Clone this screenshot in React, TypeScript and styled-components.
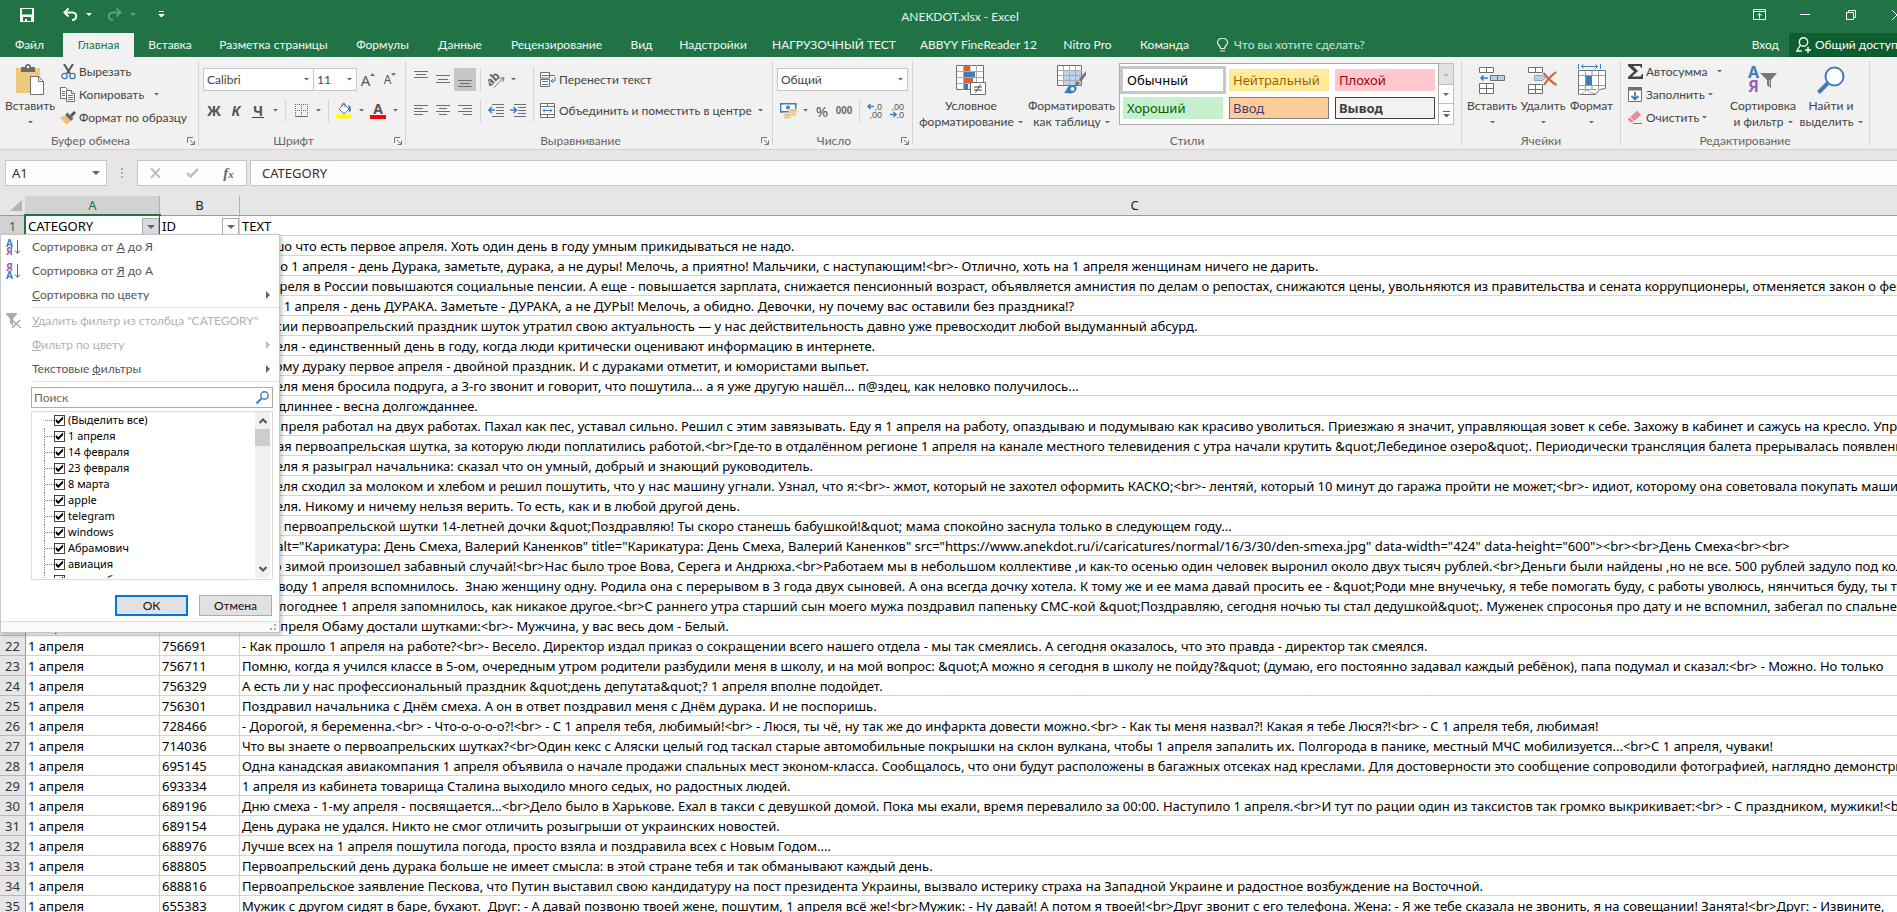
import React from 'react';
import styled, { createGlobalStyle, css } from 'styled-components';

const GREEN = '#217346';
const UI_FONT = 'Lato, "Noto Sans", sans-serif';
const CELL_FONT = '"Noto Sans", "Open Sans", sans-serif';

const Global = createGlobalStyle`
  * { box-sizing: border-box; }
  body { margin: 0; overflow: hidden; font: 12px/16px ${UI_FONT}; color: #444; background: #e6e6e6; }
  button, input, select { font: inherit; color: inherit; margin: 0; border-radius: 0; }
  button { border: 0; padding: 0; background: none; }
  svg { display: block; flex: none; }
`;

/* The window runs slightly past the right edge of the screen. */
const Window = styled.div`
  display: flex;
  flex-direction: column;
  width: calc(100% + 23px);
  height: 100vh;
  overflow: hidden;
`;

/* ---------- title bar ---------- */
const TitleBar = styled.header`
  display: grid;
  grid-template-columns: 1fr auto 1fr;
  align-items: center;
  height: 33px;
  background: ${GREEN};
  color: #fff;
`;
const QuickAccess = styled.div`
  display: flex;
  align-items: center;
  gap: 8px;
  padding: 0 0 4px 20px;
`;
const QuickButton = styled.button<{ $gap?: number; $dim?: boolean }>`
  display: flex;
  align-items: center;
  color: #fff;
  margin-left: ${p => p.$gap ?? 0}px;
  opacity: ${p => (p.$dim ? 0.3 : 1)};
`;
const FileTitle = styled.h1`
  margin: 0;
  font-size: 12px;
  font-weight: 400;
  color: #e9f2ed;
`;
const WindowButtons = styled.div`
  display: flex;
  justify-content: flex-end;
  padding-bottom: 4px;
`;
const WindowButton = styled.button`
  display: flex;
  align-items: center;
  justify-content: center;
  width: 46px;
  height: 28px;
  color: #fff;
`;

/* ---------- tabs ---------- */
const TabBar = styled.nav`
  display: flex;
  height: 24px;
  background: ${GREEN};
  color: #f2f8f4;
`;
const Tab = styled.button<{ $w: number; $active?: boolean }>`
  flex: none;
  width: ${p => p.$w}px;
  white-space: nowrap;
  ${p => p.$active && css`background: #f1f1f1; color: ${GREEN};`}
  &:first-child { padding-right: 4px; }
`;
const TellMe = styled.button`
  display: flex;
  align-items: center;
  gap: 6px;
  padding-left: 14px;
  color: #cfe3d7;
`;
const SignIn = styled.button`
  margin-left: auto;
  padding: 0 10px;
`;
const Share = styled.button`
  display: flex;
  align-items: center;
  gap: 4px;
  width: 131px;
  padding-left: 7px;
  white-space: nowrap;
  background: #0e5c2f;
  color: #fff;
`;

/* ---------- ribbon ---------- */
const Ribbon = styled.section`
  display: flex;
  flex: none;
  height: 93px;
  background: #f1f1f1;
  border-bottom: 1px solid #d2d2d2;
`;
const GroupBox = styled.div<{ $w: number }>`
  display: flex;
  flex-direction: column;
  flex: none;
  width: ${p => p.$w}px;
  margin: 4px 0;
  border-right: 1px solid #d4d4d4;
`;
const GroupBody = styled.div<{ $pad?: number }>`
  display: flex;
  flex: 1;
  padding: 0 ${p => p.$pad ?? 4}px;
`;
const GroupFooter = styled.div`
  display: flex;
  align-items: center;
  height: 16px;
  margin-bottom: -4px;
  color: #666;
`;
const GroupName = styled.span`
  flex: 1;
  text-align: center;
`;
const Launcher = styled.button`
  width: 17px;
  padding-left: 6px;
`;
const BigButton = styled.button<{ $w: number }>`
  display: flex;
  flex-direction: column;
  align-items: center;
  width: ${p => p.$w}px;
  padding-top: 3px;
  white-space: nowrap;
`;
const BigIcon = styled.span`
  display: flex;
  align-items: center;
  justify-content: center;
  height: 32px;
  margin-bottom: 2px;
`;
const Line = styled.span`
  display: flex;
  align-items: center;
  gap: 4px;
  height: 16px;
`;
const Stack = styled.div<{ $w?: number }>`
  display: flex;
  flex-direction: column;
  width: ${p => (p.$w ? p.$w + 'px' : 'auto')};
  margin-top: -1px;
`;
const SmallButton = styled.button`
  display: flex;
  align-items: center;
  gap: 3px;
  height: 23px;
  padding-left: 2px;
  white-space: nowrap;
`;
const IconSlot = styled.span`
  display: flex;
  justify-content: center;
  width: 16px;
`;
const ArrowSlot = styled.span<{ $gap?: number }>`
  margin-left: ${p => p.$gap ?? 0}px;
`;
const Rows = styled.div`
  display: flex;
  flex-direction: column;
  gap: 8px;
  padding-top: 7px;
`;
const Row = styled.div`
  display: flex;
  align-items: center;
  height: 23px;
`;
const Tool = styled.button<{ $on?: boolean; $w?: number }>`
  display: flex;
  align-items: center;
  justify-content: center;
  width: ${p => p.$w ?? 22}px;
  height: 23px;
  background: ${p => (p.$on ? '#c6c6c6' : 'none')};
`;
const Bar = styled.i<{ $tall?: boolean }>`
  align-self: ${p => (p.$tall ? 'flex-start' : 'center')};
  width: 1px;
  height: ${p => (p.$tall ? 55 : 22)}px;
  margin: ${p => (p.$tall ? '6px 4px 0' : '0 4px')};
  background: #d4d4d4;
`;
const Letter = styled.span<{ $kind?: 'italic' | 'under' | 'big' | 'font' | 'small' | 'digits' }>`
  font: 700 14px/18px "Noto Sans", sans-serif;
  color: #555;
  ${p => p.$kind === 'italic' && css`font-style: italic;`}
  ${p => p.$kind === 'under' && css`border-bottom: 1px solid #444; line-height: 13px; padding: 0 1px;`}
  ${p => p.$kind === 'big' && css`font-weight: 400; font-size: 15px;`}
  ${p => p.$kind === 'small' && css`font-weight: 400; font-size: 12px;`}
  ${p => p.$kind === 'digits' && css`font: 700 10px/12px "Liberation Sans Narrow", "Liberation Sans", sans-serif; color: #666;`}
  ${p => p.$kind === 'font' && css`border-bottom: 4px solid #f00; line-height: 13px; padding: 0 3px;`}
`;
const Combo = styled.span<{ $w: number; $joined?: boolean }>`
  position: relative;
  display: flex;
  width: ${p => p.$w}px;
  height: 23px;
  background: #fff;
  border: 1px solid #c6c6c6;
  border-left-width: ${p => (p.$joined ? 0 : 1)}px;
  svg { position: absolute; right: 4px; top: 9px; pointer-events: none; }
`;
const ComboSelect = styled.select`
  appearance: none;
  flex: 1;
  width: 100%;
  border: 0;
  padding: 0 0 0 3px;
  background: transparent;
`;
const Gallery = styled.div`
  display: flex;
  align-self: flex-start;
  margin: 2px 0 0 3px;
`;
const StyleGrid = styled.div`
  display: grid;
  grid-template-columns: repeat(3, 100px);
  gap: 6px;
  padding: 5px 3px;
  background: #fff;
  border: 1px solid #ababab;
`;
const StyleCell = styled.button<{ $bg: string; $fg: string; $edge?: string; $bold?: boolean; $current?: boolean }>`
  height: 22px;
  padding: 0 4px;
  text-align: left;
  font: ${p => (p.$bold ? 700 : 400)} 13px/18px ${CELL_FONT};
  background: ${p => p.$bg};
  color: ${p => p.$fg};
  border: ${p => (p.$edge ? `1px solid ${p.$edge}` : '0')};
  padding-left: ${p => (p.$edge ? 3 : 4)}px;
  outline: ${p => (p.$current ? '3px solid #c6c6c6' : 'none')};
`;
const GalleryScroll = styled.div`
  display: grid;
  grid-template-rows: 21px 19px 22px;
  width: 15px;
`;
const GalleryStep = styled.button<{ $off?: boolean }>`
  display: flex;
  flex-direction: column;
  align-items: center;
  justify-content: center;
  gap: 2px;
  color: ${p => (p.$off ? '#bbb' : '#666')};
  background: ${p => (p.$off ? '#e1e1e1' : '#fff')};
  border: solid #c0c0c0;
  border-width: 1px 1px 0 0;
  &:last-child { border-bottom-width: 1px; }
`;

/* ---------- formula bar ---------- */
const FormulaBar = styled.section`
  display: flex;
  flex: none;
  align-items: center;
  height: 46px;
  padding: 0 5px;
`;
const NameBox = styled.span`
  position: relative;
  width: 102px;
  svg { position: absolute; right: 7px; top: 11px; }
`;
const BarInput = styled.input`
  display: block;
  width: 100%;
  height: 26px;
  padding: 0 6px;
  border: 1px solid #c6c6c6;
  background: #fdfdfd;
  font: 13px/20px ${CELL_FONT};
  color: #333;
  outline: 0;
`;
const FormulaText = styled(BarInput)`
  flex: 1;
  margin-left: 3px;
  padding: 0 11px;
`;
const Dots = styled.span`
  width: 30px;
  display: flex;
  justify-content: center;
`;
const FormulaTools = styled.div`
  display: flex;
  align-items: center;
  justify-content: space-around;
  width: 110px;
  height: 26px;
  border: 1px solid #c6c6c6;
  background: #fdfdfd;
`;
const Fx = styled.span`
  font: italic 700 15px/20px "Liberation Serif", serif;
  color: #666;
  small { font-size: 11px; }
`;

/* ---------- sheet ---------- */
const SheetArea = styled.main`
  position: relative;
  flex: 1;
  overflow: hidden;
`;
const Sheet = styled.table`
  table-layout: fixed;
  width: 2030px;
  border-collapse: separate;
  border-spacing: 0;
  font: 13px/17px ${CELL_FONT};
  color: #000;
`;
const ColHead = styled.th<{ $on?: boolean }>`
  height: 20px;
  padding: 0;
  font-weight: 400;
  line-height: 17px;
  background: ${p => (p.$on ? '#d2d2d2' : '#e6e6e6')};
  color: ${p => (p.$on ? GREEN : '#222')};
  border-bottom: 1px solid #999;
  border-right: 1px solid #b1b1b1;
`;
const Corner = styled(ColHead)`
  padding-left: 10px;
  border-right-color: #d2d2d2;
`;
const RowHead = styled.th<{ $on?: boolean }>`
  height: 20px;
  padding: 2px 0 0;
  font-weight: 400;
  background: ${p => (p.$on ? '#d2d2d2' : '#e6e6e6')};
  color: ${p => (p.$on ? GREEN : '#333')};
  border-right: 1px solid #999;
  border-bottom: 1px solid #b8b8b8;
`;
const Cell = styled.td<{ $selected?: boolean }>`
  position: relative;
  height: 20px;
  padding: 2px 0 0 2px;
  overflow: ${p => (p.$selected ? 'visible' : 'hidden')};
  white-space: pre;
  background: #fff;
  border-right: 1px solid #d4d4d4;
  border-bottom: 1px solid #d4d4d4;
`;
const Selection = styled.span`
  position: absolute;
  inset: -2px;
  border: 2px solid ${GREEN};
  pointer-events: none;
`;
const HeadCell = styled.div`
  display: flex;
  align-items: center;
  justify-content: space-between;
  height: 17px;
`;
const FilterButton = styled.button<{ $on?: boolean }>`
  display: flex;
  align-items: center;
  justify-content: center;
  width: 17px;
  height: 17px;
  border: 1px solid #ababab;
  background: ${p => (p.$on ? '#d6dbe2' : '#fcfcfd')};
  color: #555;
`;

/* ---------- filter menu ---------- */
const Menu = styled.div`
  position: absolute;
  left: 0;
  top: 38px;
  width: 280px;
  background: #fff;
  border: 1px solid #c6c6c6;
  box-shadow: 2px 2px 4px rgba(0, 0, 0, 0.22);
  color: #555;
`;
const MenuItem = styled.button`
  display: flex;
  align-items: center;
  width: 100%;
  height: 24px;
  padding-right: 9px;
  color: #555;
  text-align: left;
  white-space: nowrap;
  &:disabled { color: #b1b1b1; }
`;
const MenuIcon = styled.span`
  display: flex;
  width: 31px;
  padding-left: 5px;
`;
const MenuText = styled.span`
  flex: 1;
`;
const MenuRule = styled.hr<{ $after: number }>`
  height: 1px;
  margin: 0 0 ${p => p.$after}px 32px;
  border: 0;
  background: #e1e1e1;
`;
const Panel = styled.div`
  margin: 0 6px 0 30px;
`;
const SearchBox = styled.label`
  display: flex;
  align-items: center;
  height: 21px;
  padding-right: 3px;
  border: 1px solid #ababab;
  input { flex: 1; min-width: 0; height: 19px; border: 0; padding: 0 2px; outline: 0; background: none; }
  input::placeholder { color: #6a6a6a; opacity: 1; }
`;
const ListBox = styled.div`
  display: flex;
  height: 169px;
  margin-top: 3px;
  padding-right: 2px;
  border: 1px solid #dcdcdc;
`;
const CheckList = styled.ul`
  flex: 1;
  height: 166px;
  margin: 0;
  padding: 0 0 0 12px;
  overflow: hidden;
  list-style: none;
  font: 11px/16px ${CELL_FONT};
  color: #000;
`;
const CheckRow = styled.li`
  height: 16px;
  border-left: 1px dotted #888;
  &:first-child { border-left-color: transparent; }
  label { display: flex; align-items: center; height: 16px; }
  label::before { content: ''; width: 9px; border-top: 1px dotted #888; }
`;
const Check = styled.input`
  appearance: none;
  width: 11px;
  height: 11px;
  margin-right: 3px;
  border: 1px solid #444;
  background: #fff;
  &:checked::after {
    content: '';
    display: block;
    width: 9px;
    height: 9px;
    background: #000;
    clip-path: polygon(8% 40%, 38% 62%, 90% 8%, 90% 38%, 38% 95%, 8% 70%);
  }
`;
const Scroll = styled.div`
  display: flex;
  flex-direction: column;
  align-items: center;
  justify-content: space-between;
  width: 15px;
  height: 166px;
  padding: 6px 0;
  background: #f0f0f0;
`;
const Thumb = styled.i`
  width: 15px;
  height: 17px;
  margin: 5px 0 auto;
  background: #cdcdcd;
`;
const Actions = styled.div`
  display: flex;
  justify-content: flex-end;
  gap: 11px;
  margin: 15px 1px 5px 0;
`;
const ActionButton = styled.button<{ $main?: boolean }>`
  width: 73px;
  height: 21px;
  background: #e1e1e1;
  border: ${p => (p.$main ? '2px solid #0078d7' : '1px solid #adadad')};
  font: 12px/14px ${UI_FONT};
  color: #111;
`;
const Grip = styled.div`
  display: flex;
  justify-content: flex-end;
  height: 11px;
  padding: 2px 3px;
  border-top: 1px solid #d8dde3;
  background: #fafafa;
`;

/* ---------- icons ---------- */
const G = '#6f6f6f';
const B = '#3f7cbc';

const Arrow = ({ c = '#666', w = 6 }: { c?: string; w?: number }) => (
  <svg width={w} height={w / 2} viewBox="0 0 6 3"><path d="M0 0h6L3 3z" fill={c} /></svg>
);
const LauncherIcon = () => (
  <svg width="8" height="8" fill="none" stroke="#777"><path d="M.5 6V.5H6M3 3l4 4M7.500 3.500v4h-4" /></svg>
);
const SaveIcon = () => (
  <svg width="14" height="14" viewBox="0 0 14 14" fill="#fff"><path fillRule="evenodd" d="M0 0h14v14H0zM2 1v5.500h10V1zM3 9v4h2v-2h2v2h4V9z" /></svg>
);
const UndoIcon = ({ flip }: { flip?: boolean }) => (
  <svg width="15" height="13" viewBox="0 0 15 13" fill="none" stroke="currentColor" strokeWidth="2">
    <g transform={flip ? 'matrix(-1 0 0 1 15 0)' : undefined}>
      <path d="M5.500.5 1.500 4.500l4 4" /><path d="M2 4.500h7.500c5 0 5 7.500-.5 7.500" />
    </g>
  </svg>
);
const CustomizeIcon = () => (
  <svg width="7" height="7" fill="#fff"><path d="M1 0h5v1H1zM0 3h7L3.500 6.500z" /></svg>
);
const RibbonModeIcon = () => (
  <svg width="13" height="11" fill="none" stroke="#fff"><path d="M.5.5h12v10H.5zM.5 2.500h12M6.500 9.500v-5M4.500 6.500l2-2 2 2" /></svg>
);
const MinIcon = () => <svg width="10" height="1"><path d="M0 0h10v1H0z" fill="#fff" /></svg>;
const RestoreIcon = () => (
  <svg width="10" height="10" fill="none" stroke="#fff"><path d="M.5 2.500h7v7h-7zM2.500 2.500v-2h7v7h-2" /></svg>
);
const CloseIcon = () => <svg width="10" height="10" stroke="#fff"><path d="m0 0 10 10M10 0 0 10" /></svg>;
const BulbIcon = () => (
  <svg width="11" height="14" fill="none" stroke="#e4f0e9" strokeWidth="1.200"><path d="M3.500 10.500c0-3-3-3-3-6a4.500 4 0 0 1 10 0c0 3-3 3-3 6zM3 13h5" /></svg>
);
const ShareIcon = () => (
  <svg width="15" height="16" fill="none" stroke="#fff" strokeWidth="1.400"><circle cx="7.500" cy="5" r="4.200" /><path d="M4.500 8 .8 14h5M12 10v6M9 13h6" /></svg>
);
const PasteIcon = () => (
  <svg width="30" height="32" viewBox="0 0 30 32">
    <path d="M1 4h24v25H1z" fill="#edc87e" /><path d="M6 3h4c0-4 6-4 6 0h4v5H6z" fill="#6b6b6b" /><circle cx="13" cy="3" r="1.300" fill="#f1f1f1" />
    <path d="M15.500 12.500h8l5 5v13h-13z" fill="#fff" stroke={G} /><path d="M23.500 12.500v5h5" fill="none" stroke={G} />
  </svg>
);
const CutIcon = () => (
  <svg width="15" height="16" fill="none"><path d="m3 0 6 9.500M12 0 6 9.500" stroke="#555" strokeWidth="2" /><circle cx="3.500" cy="12" r="2.700" stroke={B} strokeWidth="1.300" /><circle cx="11.500" cy="12" r="2.700" stroke={B} strokeWidth="1.300" /></svg>
);
const CopyIcon = () => (
  <svg width="16" height="15" fill="#fff" stroke={G}><path d="M.5.5h5l3 3v8h-8z" /><path d="M2 4.500h3M2 6.500h3M2 8.500h3" stroke={B} /><path d="M6.500 3.500h5l3 3v8h-8z" /><path d="M11.500 3.500v3h3" /><path d="M8 8.500h5M8 10.500h5M8 12.500h5" stroke={B} /></svg>
);
const BrushIcon = () => (
  <svg width="16" height="14"><path d="m0 6 6-1 5 5-5 4c-1-3-4-4-6-8z" fill="#edc07a" /><path d="m5 4 2.500-2.500 6 6L11 10z" fill="#6b6b6b" /><path d="m10 4 4-4 2 2-4 4z" fill="#555" /></svg>
);
const SizeMark = ({ down }: { down?: boolean }) => (
  <svg width="5" height="14" viewBox="0 0 5 14"><path d={down ? 'M0 0h5L2.500 3z' : 'M0 3h5L2.500 0z'} fill={B} /></svg>
);
const BordersIcon = () => (
  <svg width="13" height="13" fill="none" stroke="#666" strokeDasharray="1 1"><path d="M0 .5h13M0 6.500h13M.5 0v12M6.500 0v12M12.500 0v12" /><path d="M0 12.500h13" strokeDasharray="none" /></svg>
);
const FillIcon = () => (
  <svg width="16" height="17" viewBox="0 0 16 17"><path d="M0 12.500h16v4H0z" fill="#ff0" /><path d="m3 7 5-5 5 5-5 5z" fill="#fff" stroke={G} /><path d="M6 5V2a1.700 1.700 0 0 1 3 0v3" fill="none" stroke={G} /><path d="M12 3c3 1 4 4 2 7-1 0-2-1-1-3z" fill={B} /></svg>
);
const Lines = ({ rows, h = 13 }: { rows: [number, number, number][]; h?: number }) => (
  <svg width="14" height={h} stroke={G}>{rows.map(([x1, x2, y]) => <path key={y} d={`M${x1} ${y}.5H${x2}`} />)}</svg>
);
const OrientIcon = () => (
  <svg width="17" height="16" viewBox="0 0 17 16"><text x="-2" y="11" transform="rotate(-45 5 8)" fontFamily="Noto Sans" fontWeight="700" fontSize="12" fill="#666">ab</text><path d="m6 15.500 9-9M16 5.500l-4.500 1M16 5.500l-1 4.500" stroke="#777" fill="none" /></svg>
);
const IndentIcon = ({ right }: { right?: boolean }) => (
  <svg width="16" height="13" fill="none"><path d="M4 .5h12M8 3.500h8M8 6.500h8M8 9.500h8M4 12.500h12" stroke={G} /><path d={right ? 'M0 6h6M3.500 3l3 3-3 3' : 'M1 6h6M4 3 1 6l3 3'} stroke={B} strokeWidth="1.600" /></svg>
);
const WrapIcon = () => (
  <svg width="16" height="16" fill="none"><path d="M.5 6V.5h9V6zM.5 14.500v-7h9v7z" stroke={G} fill="#fff" /><path d="M2 3.500h13M2 9.500h6M2 12.500h6M15 5v4h-4M13 7l-2 2 2 2" stroke={B} /></svg>
);
const MergeIcon = () => (
  <svg width="16" height="15" fill="#fff" stroke={G}><path d="M.5.5h14v14H.5zM.5 3.500h14M.5 11.500h14M7.500.5v3M7.500 11.500v3" /><path d="M3 7.500h9M5 5.500l-2 2 2 2M10 5.500l2 2-2 2" stroke={B} fill="none" /></svg>
);
const MoneyIcon = () => (
  <svg width="17" height="16"><path d="M.7.700h15v8H.7z" fill="#fff" stroke={B} strokeWidth="1.400" /><circle cx="8" cy="4.500" r="2" fill={B} /><path d="M0 0h3L0 3zM16.400 0h-3l3 3zM0 9.400h3l-3-3z" fill={B} /><g fill="#edc07a" stroke="#f1f1f1" strokeWidth=".6"><ellipse cx="12.500" cy="11.500" rx="4" ry="1.700" /><ellipse cx="12.500" cy="9.500" rx="4" ry="1.700" /><ellipse cx="12.500" cy="7.500" rx="4" ry="1.700" /><ellipse cx="7.500" cy="14" rx="4" ry="1.700" /><ellipse cx="7.500" cy="12" rx="4" ry="1.700" /></g></svg>
);
const DecimalIcon = ({ less }: { less?: boolean }) => (
  <svg width="16" height="16" viewBox="0 0 16 16" fontFamily="Liberation Sans" fontSize="9" fill="#555">
    <text x="15" y="7" textAnchor="end">{less ? ',00' : ',0'}</text>
    <text x="15" y="15" textAnchor="end">{less ? ',0' : ',00'}</text>
    <path d={less ? 'M1 11.500h6M4.500 9 7 11.500 4.500 14' : 'M1 3.500h6M3.500 1 1 3.500 3.500 6'} stroke={B} strokeWidth="1.500" fill="none" />
  </svg>
);
const CondIcon = () => (
  <svg width="30" height="31" viewBox="0 0 30 31"><path d="M.5.5h27v24H.5z" fill="#fff" stroke={G} /><path d="M7.500 0v25M20.500 0v25M14 0v25M1 6.500h26M1 12.500h26M1 18.500h26" stroke="#aaa" /><path d="M8 1h6v5H8zM8 13h9v5H8z" fill="#d9603b" /><path d="M8 7h11v5H8zM8 19h4v5H8z" fill={B} /><path d="M14.500 17.500h15v12h-15z" fill="#fff" stroke={G} /><path d="M18 22h8M18 25h8M24.500 19.500l-5 8" stroke="#444" /></svg>
);
const TableIcon = () => (
  <svg width="30" height="30" viewBox="0 0 30 30"><path d="M.5.5h24v20H.5z" fill="#fff" stroke={G} /><path d="M7 6h17v14H7z" fill="#bcd2ea" /><path d="M6.500 1v19M12.500 1v19M18.500 1v19M1 5.500h24M1 10.500h24M1 15.500h24" stroke="#aaa" /><path d="m29 6-7 8 2 3 5-7zM20 16l-2 3 2 2 3-3z" fill="#777" /><path d="M6 28c4 0 3-8 9-8s6 6 1 8c-3 1-8 0-10 0z" fill={B} /><circle cx="15.500" cy="24" r="2" fill="#e7f0f9" /></svg>
);
const RowsIcon = () => (
  <svg width="28" height="29" viewBox="0 0 28 29" fill="#fff" stroke={G}><path d="M1.500 1.500h14v5h-14zM8.500 1.500v5M1.500 17.500h14v10h-14zM8.500 17.500v10M1.500 22.500h14" /><path d="M12.500 9.500h14v5h-14zM19.500 9.500v5" fill="#bcd2ea" /><path d="M10 12H3M5.500 9.500 3 12l2.500 2.500" stroke={B} strokeWidth="1.600" fill="none" /></svg>
);
const DeleteIcon = () => (
  <svg width="30" height="29" viewBox="0 0 30 29" fill="#fff" stroke={G}><path d="M.5 1.500h14v5H.5zM7.500 1.500v5M.5 18.500h14v9H.5zM7.500 18.500v9M.5 23.500h14" /><path d="M6.500 9.500h8l3 2.500-3 2.500h-8z" fill="#bcd2ea" stroke="#8aa4c4" /><path d="M15.500 7c4 5 8 9 13 12M28 6c-5 4-9 8-12 13" stroke="#d9603b" strokeWidth="2.200" fill="none" /></svg>
);
const FormatIcon = () => (
  <svg width="28" height="32" viewBox="0 0 28 32" fill="none" stroke={G}><path d="M.5 6.500h27v18l-6 1-4 5H.5z" fill="#fff" /><path d="M7.500 6.500v19M20.500 6.500v19M14 6.500v5M14 21.500v4M.5 11.500h27M.5 21.500h27M.5 25.500h18M.5 30.500c6 0 5-4 8-4s3 3 9 3" stroke="#999" /><path d="M8 12h6v9H8z" fill={B} stroke="none" /><path d="M3 2.500h17M.5 0v5M22.500 0v5M5.500.5l-2 2 2 2M17.500.5l2 2-2 2" stroke={B} /></svg>
);
const SumIcon = () => <svg width="15" height="15"><path d="M0 0h14v4h-1L12 2H5l5 5-6 5.500h8.500L14 10h1v5H0v-2l6-5.500L0 2z" fill="#444" /></svg>;
const FillDownIcon = () => (
  <svg width="15" height="16"><path d="M.5.5h13v14H.5z" fill="#fff" stroke={G} /><path d="M0 0h14v3.500H0z" fill={G} /><path d="M7 5v7M3.500 9 7 12.500 10.500 9" stroke={B} strokeWidth="1.800" fill="none" /></svg>
);
const EraserIcon = () => <svg width="15" height="14"><path d="m0 8 8-7.500q1-1 2 0L13 4 5 11H2L0 9z" fill="#e88a9b" /><path d="m2 6 4 4.500" stroke="#fff" /><path d="M5 12.500h9" stroke="#777" /></svg>;
const SortFilterIcon = () => (
  <svg width="30" height="30" viewBox="0 0 30 30" fontFamily="Noto Sans" fontWeight="700" fontSize="16"><text x="0" y="13" fill={B}>А</text><text x="0" y="27" fill="#9063b6">Я</text><path d="M12 8h17l-6 7v8l-4-3v-5z" fill="#777" /><path d="M21.500 15v5.500" stroke="#ccc" /></svg>
);
const FindIcon = () => (
  <svg width="28" height="28" viewBox="0 0 28 28" fill="none" stroke={B}><path d="M1.500 26.500 11 17" strokeWidth="4" /><circle cx="17.500" cy="10.500" r="9" fill="#fff" strokeWidth="2" /></svg>
);
const SortIcon = ({ desc }: { desc?: boolean }) => (
  <svg width="15" height="17" viewBox="0 0 15 17" fontFamily="Noto Sans" fontWeight="700" fontSize="10"><text x="0" y="8" fill={desc ? '#9063b6' : B}>{desc ? 'Я' : 'А'}</text><text x="0" y="16" fill={desc ? B : '#9063b6'}>{desc ? 'А' : 'Я'}</text><path d="M11.500 1v13M9 11.500l2.500 3 2.500-3" stroke="#666" fill="none" /></svg>
);
const ClearFilterIcon = () => (
  <svg width="16" height="16" stroke="#aaa" fill="none"><path d="M0 0h11v1L7 6v7l-3-3V6L0 1z" fill="#aaa" stroke="none" /><path d="m6 7 9 8M14 7l-8 8" strokeWidth="1.500" /></svg>
);
const LensIcon = () => <svg width="13" height="13" fill="none" stroke={B}><path d="m.5 12.500 5-5" strokeWidth="2" /><circle cx="8.500" cy="4.500" r="3.700" strokeWidth="1.400" /></svg>;
const Sub = ({ c }: { c: string }) => <svg width="4" height="8"><path d="M0 0v8l4-4z" fill={c} /></svg>;
const Chevron = ({ down }: { down?: boolean }) => <svg width="8" height="6" fill="none" stroke="#555" strokeWidth="2"><path d={down ? 'm.5 1 3.500 3.500L7.500 1' : 'M.5 5 4 1.500 7.500 5'} /></svg>;

/* ---------- data ---------- */
const TABS: [string, number][] = [
  ['Файл', 63], ['Главная', 71], ['Вставка', 72], ['Разметка страницы', 135], ['Формулы', 83], ['Данные', 72],
  ['Рецензирование', 121], ['Вид', 49], ['Надстройки', 94], ['НАГРУЗОЧНЫЙ ТЕСТ', 148], ['ABBYY FineReader 12', 141],
  ['Nitro Pro', 77], ['Команда', 77],
];

const APRIL = '1 апреля';
const DATA: [string, string][] = [
  ['', 'Хорошо что есть первое апреля. Хоть один день в году умным прикидываться не надо.'],
  ['', 'Быстро 1 апреля - день Дурака, заметьте, дурака, а не дуры! Мелочь, а приятно! Мальчики, с наступающим!<br>- Отлично, хоть на 1 апреля женщинам ничего не дарить.'],
  ['', 'С 1 апреля в России повышаются социальные пенсии. А еще - повышается зарплата, снижается пенсионный возраст, объявляется амнистия по делам о репостах, снижаются цены, увольняются из правительства и сената коррупционеры, отменяется закон о фейках'],
  ['', 'Скоро 1 апреля - день ДУРАКА. Заметьте - ДУРАКА, а не ДУРЫ! Мелочь, а обидно. Девочки, ну почему вас оставили без праздника!?'],
  ['', 'В России первоапрельский праздник шуток утратил свою актуальность — у нас действительность давно уже превосходит любой выдуманный абсурд.'],
  ['', '1 апреля - единственный день в году, когда люди критически оценивают информацию в интернете.'],
  ['', 'Каждому дураку первое апреля - двойной праздник. И с дураками отметит, и юмористами выпьет.'],
  ['', '1 апреля меня бросила подруга, а 3-го звонит и говорит, что пошутила... а я уже другую нашёл... п@здец, как неловко получилось...'],
  ['', 'Зима длиннее - весна долгожданнее.'],
  ['', 'До 1 апреля работал на двух работах. Пахал как пес, уставал сильно. Решил с этим завязывать. Еду я 1 апреля на работу, опаздываю и подумываю как красиво уволиться. Приезжаю я значит, управляющая зовет к себе. Захожу в кабинет и сажусь на кресло. Управляющая'],
  ['', 'Лучшая первоапрельская шутка, за которую люди поплатились работой.<br>Где-то в отдалённом регионе 1 апреля на канале местного телевидения с утра начали крутить &quot;Лебединое озеро&quot;. Периодически трансляция балета прерывалась появлением'],
  ['', '1 апреля я разыграл начальника: сказал что он умный, добрый и знающий руководитель.'],
  ['', '1 апреля сходил за молоком и хлебом и решил пошутить, что у нас машину угнали. Узнал, что я:<br>- жмот, который не захотел оформить КАСКО;<br>- лентяй, который 10 минут до гаража пройти не может;<br>- идиот, которому она советовала покупать машину'],
  ['', '1 апреля. Никому и ничему нельзя верить. То есть, как и в любой другой день.'],
  ['', 'После первоапрельской шутки 14-летней дочки &quot;Поздравляю! Ты скоро станешь бабушкой!&quot; мама спокойно заснула только в следующем году...'],
  ['', '<img alt="Карикатура: День Смеха, Валерий Каненков" title="Карикатура: День Смеха, Валерий Каненков" src="https://www.anekdot.ru/i/caricatures/normal/16/3/30/den-smexa.jpg" data-width="424" data-height="600"><br><br>День Смеха<br><br>'],
  ['', 'Как-то зимой произошел забавный случай!<br>Нас было трое Вова, Серега и Андрюха.<br>Работаем мы в небольшом коллективе ,и как-то осенью один человек выронил около двух тысяч рублей.<br>Деньги были найдены ,но не все. 500 рублей задуло под колесо'],
  ['', 'По поводу 1 апреля вспомнилось.  Знаю женщину одну. Родила она с перерывом в 3 года двух сыновей. А она всегда дочку хотела. К тому же и ее мама давай просить ее - &quot;Роди мне внучечьку, я тебе помогать буду, с работы уволюсь, нянчиться буду, ты только'],
  ['', 'Прошлогоднее 1 апреля запомнилось, как никакое другое.<br>С раннего утра старший сын моего мужа поздравил папеньку СМС-кой &quot;Поздравляю, сегодня ночью ты стал дедушкой&quot;. Муженек спросонья про дату и не вспомнил, забегал по спальне'],
  ['', 'На 1 апреля Обаму достали шутками:<br>- Мужчина, у вас весь дом - Белый.'],
  ['756691', '- Как прошло 1 апреля на работе?<br>- Весело. Директор издал приказ о сокращении всего нашего отдела - мы так смеялись. А сегодня оказалось, что это правда - директор так смеялся.'],
  ['756711', 'Помню, когда я учился классе в 5-ом, очередным утром родители разбудили меня в школу, и на мой вопрос: &quot;А можно я сегодня в школу не пойду?&quot; (думаю, его постоянно задавал каждый ребёнок), папа подумал и сказал:<br> - Можно. Но только'],
  ['756329', 'А есть ли у нас профессиональный праздник &quot;день депутата&quot;? 1 апреля вполне подойдет.'],
  ['756301', 'Поздравил начальника с Днём смеха. А он в ответ поздравил меня с Днём дурака. И не поспоришь.'],
  ['728466', '- Дорогой, я беременна.<br> - Что-о-о-о-о?!<br> - С 1 апреля тебя, любимый!<br> - Люся, ты чё, ну так же до инфаркта довести можно.<br> - Как ты меня назвал?! Какая я тебе Люся?!<br> - С 1 апреля тебя, любимая!'],
  ['714036', 'Что вы знаете о первоапрельских шутках?<br>Один кекс с Аляски целый год таскал старые автомобильные покрышки на склон вулкана, чтобы 1 апреля запалить их. Полгорода в панике, местный МЧС мобилизуется...<br>С 1 апреля, чуваки!'],
  ['695145', 'Одна канадская авиакомпания 1 апреля объявила о начале продажи спальных мест эконом-класса. Сообщалось, что они будут расположены в багажных отсеках над креслами. Для достоверности это сообщение сопроводили фотографией, наглядно демонстрирующей'],
  ['693334', '1 апреля из кабинета товарища Сталина выходило много седых, но радостных людей.'],
  ['689196', 'Дню смеха - 1-му апреля - посвящается...<br>Дело было в Харькове. Ехал в такси с девушкой домой. Пока мы ехали, время перевалило за 00:00. Наступило 1 апреля.<br>И тут по рации один из таксистов так громко выкрикивает:<br> - С праздником, мужики!<br>'],
  ['689154', 'День дурака не удался. Никто не смог отличить розыгрыши от украинских новостей.'],
  ['688976', 'Лучше всех на 1 апреля пошутила погода, просто взяла и поздравила всех с Новым Годом....'],
  ['688805', 'Первоапрельский день дурака больше не имеет смысла: в этой стране тебя и так обманывают каждый день.'],
  ['688816', 'Первоапрельское заявление Пескова, что Путин выставил свою кандидатуру на пост президента Украины, вызвало истерику страха на Западной Украине и радостное возбуждение на Восточной.'],
  ['655383', 'Мужик с другом сидят в баре, бухают.  Друг: - А давай позвоню твоей жене, пошутим, 1 апреля всё же!<br>Мужик: - Ну давай! А потом я твоей!<br>Друг звонит с его телефона. Жена: - Я же тебе сказала не звонить, я на совещании! Занята!<br>Друг: - Извините,'],
];

const CATEGORIES = ['(Выделить все)', '1 апреля', '14 февраля', '23 февраля', '8 марта', 'apple', 'telegram', 'windows', 'Абрамович', 'авиация', 'автомобили'];

/* ---------- parts ---------- */
const Group = ({ name, w, pad, launcher, children }: { name: string; w: number; pad?: number; launcher?: boolean; children: React.ReactNode }) => (
  <GroupBox $w={w}>
    <GroupBody $pad={pad}>{children}</GroupBody>
    <GroupFooter>
      <GroupName>{name}</GroupName>
      {launcher && <Launcher aria-label={`${name}: параметры`}><LauncherIcon /></Launcher>}
    </GroupFooter>
  </GroupBox>
);
const Big = ({ w, icon, line1, line2 }: { w: number; icon: React.ReactNode; line1: string; line2?: string }) => (
  <BigButton $w={w}>
    <BigIcon>{icon}</BigIcon>
    <Line>{line1}</Line>
    <Line>{line2}<Arrow w={5} /></Line>
  </BigButton>
);
const Small = ({ icon, text, arrowGap }: { icon: React.ReactNode; text: string; arrowGap?: number }) => (
  <SmallButton>
    <IconSlot>{icon}</IconSlot>{text}
    {arrowGap !== undefined && <ArrowSlot $gap={arrowGap}><Arrow w={5} /></ArrowSlot>}
  </SmallButton>
);
const Dropdown = ({ label }: { label: string }) => <Tool $w={12} aria-label={label}><Arrow w={5} /></Tool>;
const Picker = ({ label, value, w, joined }: { label: string; value: string; w: number; joined?: boolean }) => (
  <Combo $w={w} $joined={joined}>
    <ComboSelect aria-label={label} defaultValue={value}><option>{value}</option></ComboSelect>
    <Arrow w={5} />
  </Combo>
);

const FilterMenu = () => (
  <Menu>
    <MenuItem><MenuIcon><SortIcon /></MenuIcon><MenuText>Сортировка от <u>А</u> до Я</MenuText></MenuItem>
    <MenuItem><MenuIcon><SortIcon desc /></MenuIcon><MenuText>Сортировка от <u>Я</u> до А</MenuText></MenuItem>
    <MenuItem><MenuIcon /><MenuText><u>С</u>ортировка по цвету</MenuText><Sub c="#666" /></MenuItem>
    <MenuRule $after={1} />
    <MenuItem disabled><MenuIcon><ClearFilterIcon /></MenuIcon><MenuText><u>У</u>далить фильтр из столбца "CATEGORY"</MenuText></MenuItem>
    <MenuItem disabled><MenuIcon /><MenuText><u>Ф</u>ильтр по цвету</MenuText><Sub c="#bbb" /></MenuItem>
    <MenuItem><MenuIcon /><MenuText>Текстовые <u>ф</u>ильтры</MenuText><Sub c="#666" /></MenuItem>
    <MenuRule $after={5} />
    <Panel>
      <SearchBox><input placeholder="Поиск" aria-label="Поиск" /><LensIcon /></SearchBox>
      <ListBox>
        <CheckList>
          {CATEGORIES.map(c => (
            <CheckRow key={c}><label><Check type="checkbox" defaultChecked />{c}</label></CheckRow>
          ))}
        </CheckList>
        <Scroll><Chevron /><Thumb /><Chevron down /></Scroll>
      </ListBox>
      <Actions>
        <ActionButton $main>ОК</ActionButton>
        <ActionButton>Отмена</ActionButton>
      </Actions>
    </Panel>
    <Grip><svg width="6" height="6" fill="#aaa"><path d="M4 0h2v2H4zM4 4h2v2H4zM0 4h2v2H0z" /></svg></Grip>
  </Menu>
);

export default function App() {
  return (
    <>
      <Global />
      <Window>
        <TitleBar>
          <QuickAccess>
            <QuickButton aria-label="Сохранить"><SaveIcon /></QuickButton>
            <QuickButton $gap={21} aria-label="Отменить"><UndoIcon /></QuickButton>
            <QuickButton aria-label="Список отмены"><Arrow c="#fff" /></QuickButton>
            <QuickButton $gap={7} $dim aria-label="Вернуть"><UndoIcon flip /></QuickButton>
            <QuickButton $dim aria-label="Список возврата"><Arrow c="#fff" /></QuickButton>
            <QuickButton $gap={14} aria-label="Настройка панели"><CustomizeIcon /></QuickButton>
          </QuickAccess>
          <FileTitle>ANEKDOT.xlsx - Excel</FileTitle>
          <WindowButtons>
            <WindowButton aria-label="Параметры ленты"><RibbonModeIcon /></WindowButton>
            <WindowButton aria-label="Свернуть"><MinIcon /></WindowButton>
            <WindowButton aria-label="Восстановить"><RestoreIcon /></WindowButton>
            <WindowButton aria-label="Закрыть"><CloseIcon /></WindowButton>
          </WindowButtons>
        </TitleBar>
        <TabBar>
          {TABS.map(([t, w]) => <Tab key={t} $w={w} $active={t === 'Главная'}>{t}</Tab>)}
          <TellMe><BulbIcon />Что вы хотите сделать?</TellMe>
          <SignIn>Вход</SignIn>
          <Share><ShareIcon />Общий доступ</Share>
        </TabBar>

        <Ribbon>
          <Group name="Буфер обмена" w={199} pad={2} launcher>
            <Big w={56} icon={<PasteIcon />} line1="Вставить" />
            <Stack>
              <Small icon={<CutIcon />} text="Вырезать" />
              <Small icon={<CopyIcon />} text="Копировать" arrowGap={7} />
              <Small icon={<BrushIcon />} text="Формат по образцу" />
            </Stack>
          </Group>

          <Group name="Шрифт" w={207} launcher>
            <Rows>
              <Row>
                <Picker label="Шрифт" value="Calibri" w={111} />
                <Picker label="Размер шрифта" value="11" w={43} joined />
                <Tool aria-label="Увеличить размер шрифта"><Letter $kind="big">A</Letter><SizeMark /></Tool>
                <Tool aria-label="Уменьшить размер шрифта"><Letter $kind="small">A</Letter><SizeMark down /></Tool>
              </Row>
              <Row>
                <Tool><Letter>Ж</Letter></Tool>
                <Tool><Letter $kind="italic">К</Letter></Tool>
                <Tool><Letter $kind="under">Ч</Letter></Tool>
                <Dropdown label="Подчеркивание" />
                <Bar />
                <Tool aria-label="Границы"><BordersIcon /></Tool>
                <Dropdown label="Виды границ" />
                <Bar />
                <Tool aria-label="Цвет заливки"><FillIcon /></Tool>
                <Dropdown label="Цвета заливки" />
                <Tool><Letter $kind="font">A</Letter></Tool>
                <Dropdown label="Цвета текста" />
              </Row>
            </Rows>
          </Group>

          <Group name="Выравнивание" w={367} launcher>
            <Rows>
              <Row>
                <Tool aria-label="По верхнему краю"><Lines h={17} rows={[[0, 14, 0], [2, 12, 3], [0, 14, 6]]} /></Tool>
                <Tool aria-label="По середине"><Lines rows={[[0, 14, 2], [2, 12, 6], [0, 14, 9]]} /></Tool>
                <Tool $on aria-label="По нижнему краю"><Lines h={17} rows={[[0, 14, 9], [2, 12, 12], [0, 14, 15]]} /></Tool>
                <Bar />
                <Tool aria-label="Ориентация"><OrientIcon /></Tool>
                <Dropdown label="Виды ориентации" />
              </Row>
              <Row>
                <Tool aria-label="По левому краю"><Lines rows={[[0, 14, 1], [0, 9, 4], [0, 14, 7], [0, 9, 10]]} /></Tool>
                <Tool aria-label="По центру"><Lines rows={[[0, 14, 1], [3, 11, 4], [0, 14, 7], [3, 11, 10]]} /></Tool>
                <Tool aria-label="По правому краю"><Lines rows={[[0, 14, 1], [5, 14, 4], [0, 14, 7], [5, 14, 10]]} /></Tool>
                <Bar />
                <Tool aria-label="Уменьшить отступ"><IndentIcon /></Tool>
                <Tool aria-label="Увеличить отступ"><IndentIcon right /></Tool>
              </Row>
            </Rows>
            <Bar $tall />
            <Rows>
              <Small icon={<WrapIcon />} text="Перенести текст" />
              <Small icon={<MergeIcon />} text="Объединить и поместить в центре" arrowGap={3} />
            </Rows>
          </Group>

          <Group name="Число" w={140} launcher>
            <Rows>
              <Row><Picker label="Числовой формат" value="Общий" w={131} /></Row>
              <Row>
                <Tool aria-label="Финансовый формат"><MoneyIcon /></Tool>
                <Dropdown label="Финансовые форматы" />
                <Tool><Letter $kind="big">%</Letter></Tool>
                <Tool><Letter $kind="digits">000</Letter></Tool>
                <Bar />
                <Tool aria-label="Увеличить разрядность"><DecimalIcon /></Tool>
                <Tool aria-label="Уменьшить разрядность"><DecimalIcon less /></Tool>
              </Row>
            </Rows>
          </Group>

          <Group name="Стили" w={549} pad={2}>
            <Big w={112} icon={<CondIcon />} line1="Условное" line2="форматирование" />
            <Big w={89} icon={<TableIcon />} line1="Форматировать" line2="как таблицу" />
            <Gallery>
              <StyleGrid>
                <StyleCell $current $bg="#fff" $fg="#000">Обычный</StyleCell>
                <StyleCell $bg="#ffeb9c" $fg="#9c6500">Нейтральный</StyleCell>
                <StyleCell $bg="#ffc7ce" $fg="#9c0006">Плохой</StyleCell>
                <StyleCell $bg="#c6efce" $fg="#006100">Хороший</StyleCell>
                <StyleCell $bg="#ffcc99" $fg="#3f3f76" $edge="#7f7f7f">Ввод</StyleCell>
                <StyleCell $bold $bg="#f2f2f2" $fg="#3f3f3f" $edge="#3f3f3f">Вывод</StyleCell>
              </StyleGrid>
              <GalleryScroll>
                <GalleryStep $off aria-label="Выше"><svg width="6" height="3"><path d="M0 3h6L3 0z" fill="#bbb" /></svg></GalleryStep>
                <GalleryStep aria-label="Ниже"><Arrow /></GalleryStep>
                <GalleryStep aria-label="Все стили"><svg width="7" height="7" fill="#666"><path d="M0 0h7v1H0zM0 3h7L3.500 6.500z" /></svg></GalleryStep>
              </GalleryScroll>
            </Gallery>
          </Group>

          <Group name="Ячейки" w={159}>
            <Big w={52} icon={<RowsIcon />} line1="Вставить" />
            <Big w={50} icon={<DeleteIcon />} line1="Удалить" />
            <Big w={47} icon={<FormatIcon />} line1="Формат" />
          </Group>

          <Group name="Редактирование" w={249}>
            <Stack $w={103}>
              <Small icon={<SumIcon />} text="Автосумма" arrowGap={7} />
              <Small icon={<FillDownIcon />} text="Заполнить" arrowGap={0} />
              <Small icon={<EraserIcon />} text="Очистить" arrowGap={0} />
            </Stack>
            <Big w={70} icon={<SortFilterIcon />} line1="Сортировка" line2="и фильтр" />
            <Big w={66} icon={<FindIcon />} line1="Найти и" line2="выделить" />
          </Group>
        </Ribbon>

        <FormulaBar>
          <NameBox><BarInput aria-label="Имя" defaultValue="A1" /><Arrow w={8} /></NameBox>
          <Dots><svg width="2" height="10" fill="#aaa"><path d="M0 0h2v2H0zM0 4h2v2H0zM0 8h2v2H0z" /></svg></Dots>
          <FormulaTools>
            <button aria-label="Отмена"><svg width="11" height="10" stroke="#c0c0c0" strokeWidth="2"><path d="m1 0 9 10M10 0 1 10" /></svg></button>
            <button aria-label="Ввод"><svg width="13" height="10" fill="none" stroke="#c0c0c0" strokeWidth="2.500"><path d="m1 5 3.500 3.500L12 1" /></svg></button>
            <button aria-label="Вставить функцию"><Fx>f<small>x</small></Fx></button>
          </FormulaTools>
          <FormulaText aria-label="Строка формул" defaultValue="CATEGORY" />
        </FormulaBar>

        <SheetArea>
          <Sheet>
            <colgroup><col width="26" /><col width="134" /><col width="80" /><col width="1790" /></colgroup>
            <thead>
              <tr>
                <Corner><svg width="12" height="11"><path d="M12 0v11H0z" fill="#b4b4b4" /></svg></Corner>
                <ColHead $on>A</ColHead><ColHead>B</ColHead><ColHead>C</ColHead>
              </tr>
            </thead>
            <tbody>
              <tr>
                <RowHead $on>1</RowHead>
                <Cell $selected>
                  <HeadCell>CATEGORY<FilterButton $on aria-label="Фильтр CATEGORY"><Arrow w={8} /></FilterButton></HeadCell>
                  <Selection />
                </Cell>
                <Cell><HeadCell>ID<FilterButton aria-label="Фильтр ID"><Arrow w={8} /></FilterButton></HeadCell></Cell>
                <Cell>TEXT</Cell>
              </tr>
              {DATA.map(([id, text], i) => (
                <tr key={i}><RowHead>{i + 2}</RowHead><Cell>{APRIL}</Cell><Cell>{id}</Cell><Cell>{text}</Cell></tr>
              ))}
            </tbody>
          </Sheet>
          <FilterMenu />
        </SheetArea>
      </Window>
    </>
  );
}
